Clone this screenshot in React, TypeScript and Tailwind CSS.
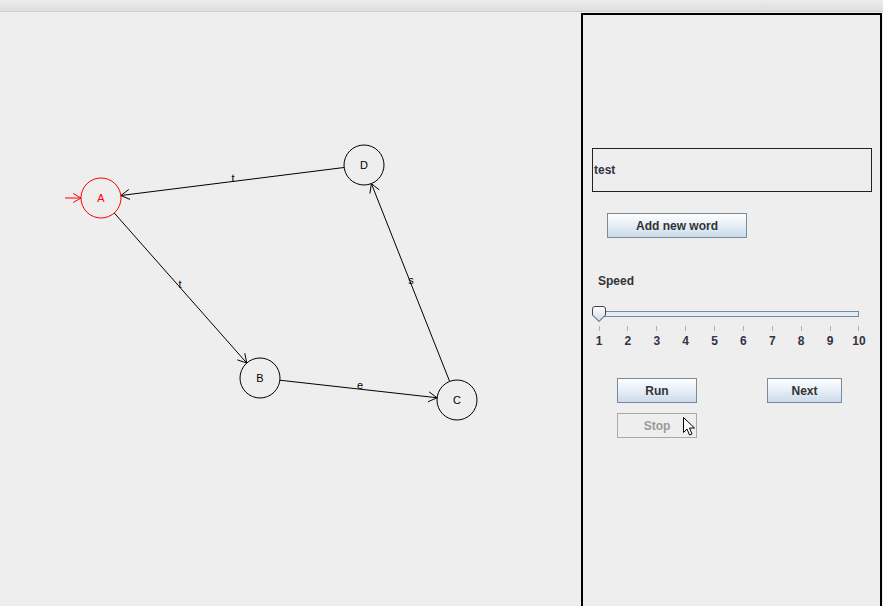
import React from 'react';

type Node = { id: string; x: number; y: number; color?: string };

const R = 20;

const nodes: Node[] = [
  { id: 'A', x: 101, y: 198, color: '#ff0000' },
  { id: 'B', x: 260, y: 378 },
  { id: 'C', x: 457, y: 400 },
  { id: 'D', x: 364, y: 165 },
];

const edges = [
  { from: 'A', to: 'B', label: 't', lx: 180, ly: 288 },
  { from: 'B', to: 'C', label: 'e', lx: 360, ly: 389 },
  { from: 'C', to: 'D', label: 's', lx: 411, ly: 284 },
  { from: 'D', to: 'A', label: 't', lx: 233, ly: 182 },
];

function arrowHead(x: number, y: number, ux: number, uy: number, len = 10) {
  // two short strokes going back from the tip, about 30 degrees off the line
  const a = Math.PI / 6;
  const bx = -ux;
  const by = -uy;
  const p1x = x + len * (bx * Math.cos(a) - by * Math.sin(a));
  const p1y = y + len * (bx * Math.sin(a) + by * Math.cos(a));
  const p2x = x + len * (bx * Math.cos(-a) - by * Math.sin(-a));
  const p2y = y + len * (bx * Math.sin(-a) + by * Math.cos(-a));
  return `M${p1x} ${p1y} L${x} ${y} L${p2x} ${p2y}`;
}

function Graph() {
  const byId = (id: string) => nodes.find(n => n.id === id)!;
  // coordinates are page coordinates, the canvas starts 12px down
  return (
    <svg width="581" height="594" viewBox="0 12 581 594" className="block" style={{ fontFamily: '"Liberation Sans", Arial, sans-serif' }}>
      {/* start arrow into A */}
      <line x1="65" y1="198" x2="81" y2="198" stroke="#ff0000" strokeWidth="1" />
      <path d={arrowHead(81, 198, 1, 0, 9)} fill="none" stroke="#ff0000" strokeWidth="1" />

      {edges.map((e, i) => {
        const a = byId(e.from);
        const b = byId(e.to);
        const dx = b.x - a.x;
        const dy = b.y - a.y;
        const len = Math.hypot(dx, dy);
        const ux = dx / len;
        const uy = dy / len;
        const sx = a.x + ux * R;
        const sy = a.y + uy * R;
        const ex = b.x - ux * R;
        const ey = b.y - uy * R;
        return (
          <g key={i}>
            <line x1={sx} y1={sy} x2={ex} y2={ey} stroke="#000" strokeWidth="1" />
            <path d={arrowHead(ex, ey, ux, uy)} fill="none" stroke="#000" strokeWidth="1" />
            <text x={e.lx} y={e.ly} fontSize="11" textAnchor="middle" fill="#000">{e.label}</text>
          </g>
        );
      })}

      {nodes.map(n => (
        <g key={n.id}>
          <circle cx={n.x} cy={n.y} r={R} fill="none" stroke={n.color ?? '#000'} strokeWidth="1" />
          <text x={n.x} y={n.y + 4} fontSize="11" textAnchor="middle" fill={n.color ?? '#000'}>{n.id}</text>
        </g>
      ))}
    </svg>
  );
}

function SwingButton({ label, width, disabled }: { label: string; width: string; disabled?: boolean }) {
  if (disabled) {
    return (
      <div className={`${width} h-[25px] border border-[#a9a9a9] bg-[#eeeeee] flex items-center justify-center text-[12px] font-bold text-[#9a9a9a]`}>
        {label}
      </div>
    );
  }
  return (
    <div className={`${width} h-[25px] border border-[#7a8a99] bg-gradient-to-b from-[#ffffff] via-[#e6eef6] to-[#cbdbeb] flex items-center justify-center text-[12px] font-bold text-[#333333]`}>
      {label}
    </div>
  );
}

function SpeedSlider() {
  const ticks = [1, 2, 3, 4, 5, 6, 7, 8, 9, 10];
  return (
    <div className="ml-[9px] mt-[17px] w-[268px]">
      <div className="relative h-[16px]">
        <div className="absolute left-[2px] w-[265px] top-[5px] h-[6px] border border-[#7a8a99] bg-[#e3ebf3]" />
        <svg className="absolute left-0 top-0" width="15" height="16" viewBox="0 0 15 16">
          <defs>
            <linearGradient id="thumb" x1="0" y1="0" x2="0" y2="1">
              <stop offset="0" stopColor="#ffffff" />
              <stop offset="1" stopColor="#c9d9ea" />
            </linearGradient>
          </defs>
          <path d="M0.5 3 Q0.5 0.5 3 0.5 L11 0.5 Q13.5 0.5 13.5 3 L13.5 9 L7 15.5 L0.5 9 Z" fill="url(#thumb)" stroke="#444" strokeWidth="1" />
        </svg>
      </div>
      <div className="ml-[7px] w-[260px] mt-[4px] flex justify-between">
        {ticks.map(t => (
          <div key={t} className="w-0 flex flex-col items-center">
            <div className="w-px h-[5px] bg-[#9fb3c8]" />
            <div className="mt-[3px] text-[12px] font-bold text-[#333344] leading-[14px]">{t}</div>
          </div>
        ))}
      </div>
    </div>
  );
}

export default function App() {
  return (
    <div className="w-[883px] h-[606px] overflow-hidden bg-[#eeeeee] flex flex-col" style={{ fontFamily: '"Liberation Sans", Arial, sans-serif' }}>
      <div className="h-[12px] shrink-0 bg-gradient-to-b from-[#ececec] to-[#dedede] border-b border-[#cfcfcf]" />
      <div className="flex flex-1 min-h-0">
        <div className="w-[581px] shrink-0">
          <Graph />
        </div>
        <div className="relative mt-[1px] w-[301px] border-2 border-b-0 border-black flex flex-col">
          <div className="ml-[9px] mt-[133px] w-[280px] h-[44px] border border-[#222222] flex items-center pl-[1px] text-[12px] font-bold text-[#333344]">
            test
          </div>
          <div className="ml-[24px] mt-[21px]">
            <SwingButton label="Add new word" width="w-[140px]" />
          </div>
          <div className="ml-[15px] mt-[36px] text-[12px] font-bold text-[#333333] leading-[15px]">Speed</div>
          <SpeedSlider />
          <div className="ml-[34px] mt-[30px] flex gap-[70px]">
            <SwingButton label="Run" width="w-[80px]" />
            <SwingButton label="Next" width="w-[75px]" />
          </div>
          <div className="ml-[34px] mt-[10px]">
            <SwingButton label="Stop" width="w-[80px]" disabled />
          </div>
          {/* mouse pointer */}
          <svg className="absolute left-[100px] top-[402px]" width="13" height="20" viewBox="0 0 13 20">
            <path d="M0.5 0.5 L0.5 15.5 L4 12 L6.5 18 L9 17 L6.5 11 L11.5 11 Z" fill="#ffffff" stroke="#000" strokeWidth="1" strokeLinejoin="miter" />
          </svg>
        </div>
      </div>
    </div>
  );
}
